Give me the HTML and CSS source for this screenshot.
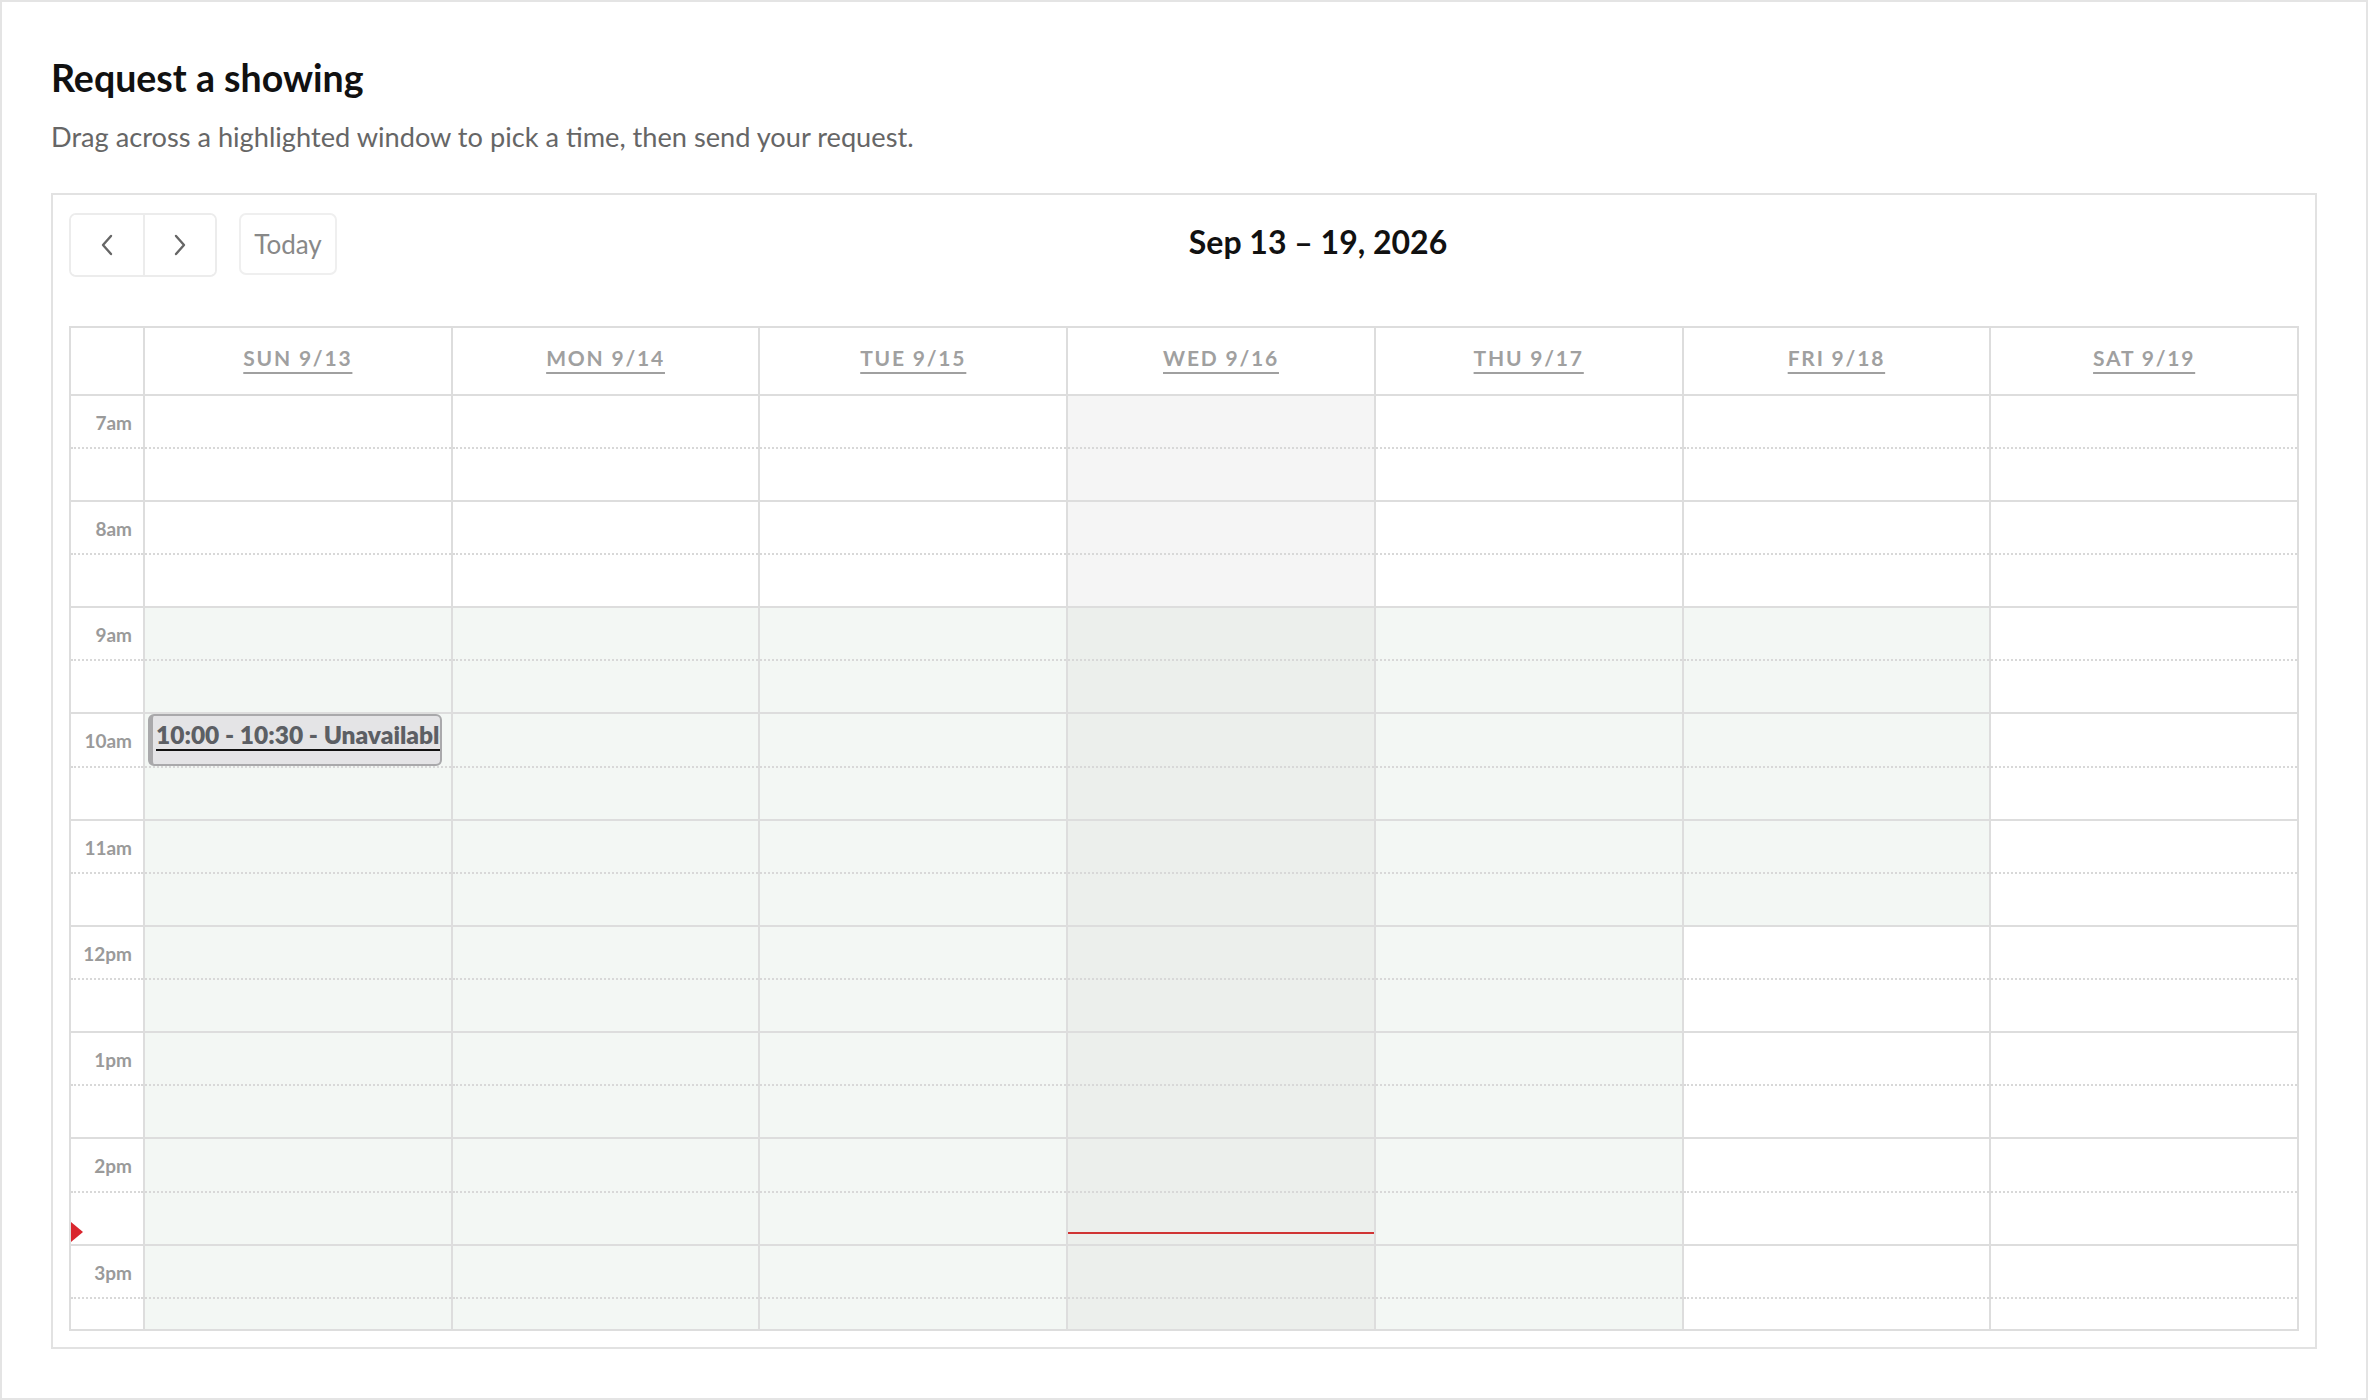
FILE: index.html
```html
<!DOCTYPE html>
<html lang="en">
<head>
<meta charset="utf-8">
<title>Request a showing</title>
<link rel="stylesheet" href="styles.css">
</head>
<body>
<div class="page">
  <h1 class="title">Request a showing</h1>
  <p class="subtitle">Drag across a highlighted window to pick a time, then send your request.</p>

  <div class="calendar">
    <div class="toolbar">
      <div class="tb-left">
        <div class="btn-group">
          <button class="btn nav" aria-label="prev"><svg width="14" height="22" viewBox="0 0 14 22"><polyline points="11,2 3,11 11,20" fill="none" stroke="#666" stroke-width="2.4" stroke-linecap="round" stroke-linejoin="round"/></svg></button>
          <button class="btn nav" aria-label="next"><svg width="14" height="22" viewBox="0 0 14 22"><polyline points="3,2 11,11 3,20" fill="none" stroke="#666" stroke-width="2.4" stroke-linecap="round" stroke-linejoin="round"/></svg></button>
        </div>
        <button class="btn today">Today</button>
      </div>
      <h2 class="range">Sep 13 – 19, 2026</h2>
      <div class="tb-right"></div>
    </div>

    <div class="grid">
      <div class="head">
        <div class="gutter-head"></div>
        <div class="day-head"><span>Sun 9/13</span></div>
        <div class="day-head"><span>Mon 9/14</span></div>
        <div class="day-head"><span>Tue 9/15</span></div>
        <div class="day-head"><span>Wed 9/16</span></div>
        <div class="day-head"><span>Thu 9/17</span></div>
        <div class="day-head"><span>Fri 9/18</span></div>
        <div class="day-head"><span>Sat 9/19</span></div>
      </div>

      <div class="body">
        <!-- time gutter -->
        <div class="col gutter">
          <div class="slot"><span class="time">7am</span></div><div class="slot h2"></div>
          <div class="slot"><span class="time">8am</span></div><div class="slot h2"></div>
          <div class="slot"><span class="time">9am</span></div><div class="slot h2"></div>
          <div class="slot"><span class="time">10am</span></div><div class="slot h2"></div>
          <div class="slot"><span class="time">11am</span></div><div class="slot h2"></div>
          <div class="slot"><span class="time">12pm</span></div><div class="slot h2"></div>
          <div class="slot"><span class="time">1pm</span></div><div class="slot h2"></div>
          <div class="slot"><span class="time">2pm</span></div><div class="slot h2"><span class="now-arrow"></span></div>
          <div class="slot"><span class="time">3pm</span></div><div class="slot h2"></div>
        </div>

        <!-- Sun -->
        <div class="col day">
          <div class="slot"></div><div class="slot h2"></div>
          <div class="slot"></div><div class="slot h2"></div>
          <div class="slot av"></div><div class="slot h2 av"></div>
          <div class="slot av"><div class="event"><a class="event-title" href="#">10:00 - 10:30 - Unavailable</a></div></div><div class="slot h2 av"></div>
          <div class="slot av"></div><div class="slot h2 av"></div>
          <div class="slot av"></div><div class="slot h2 av"></div>
          <div class="slot av"></div><div class="slot h2 av"></div>
          <div class="slot av"></div><div class="slot h2 av"></div>
          <div class="slot av"></div><div class="slot h2 av"></div>
        </div>

        <!-- Mon -->
        <div class="col day">
          <div class="slot"></div><div class="slot h2"></div>
          <div class="slot"></div><div class="slot h2"></div>
          <div class="slot av"></div><div class="slot h2 av"></div>
          <div class="slot av"></div><div class="slot h2 av"></div>
          <div class="slot av"></div><div class="slot h2 av"></div>
          <div class="slot av"></div><div class="slot h2 av"></div>
          <div class="slot av"></div><div class="slot h2 av"></div>
          <div class="slot av"></div><div class="slot h2 av"></div>
          <div class="slot av"></div><div class="slot h2 av"></div>
        </div>

        <!-- Tue -->
        <div class="col day">
          <div class="slot"></div><div class="slot h2"></div>
          <div class="slot"></div><div class="slot h2"></div>
          <div class="slot av"></div><div class="slot h2 av"></div>
          <div class="slot av"></div><div class="slot h2 av"></div>
          <div class="slot av"></div><div class="slot h2 av"></div>
          <div class="slot av"></div><div class="slot h2 av"></div>
          <div class="slot av"></div><div class="slot h2 av"></div>
          <div class="slot av"></div><div class="slot h2 av"></div>
          <div class="slot av"></div><div class="slot h2 av"></div>
        </div>

        <!-- Wed (today) -->
        <div class="col day today-col">
          <div class="slot"></div><div class="slot h2"></div>
          <div class="slot"></div><div class="slot h2"></div>
          <div class="slot av"></div><div class="slot h2 av"></div>
          <div class="slot av"></div><div class="slot h2 av"></div>
          <div class="slot av"></div><div class="slot h2 av"></div>
          <div class="slot av"></div><div class="slot h2 av"></div>
          <div class="slot av"></div><div class="slot h2 av"></div>
          <div class="slot av"></div><div class="slot h2 av"><span class="now-line"></span></div>
          <div class="slot av"></div><div class="slot h2 av"></div>
        </div>

        <!-- Thu -->
        <div class="col day">
          <div class="slot"></div><div class="slot h2"></div>
          <div class="slot"></div><div class="slot h2"></div>
          <div class="slot av"></div><div class="slot h2 av"></div>
          <div class="slot av"></div><div class="slot h2 av"></div>
          <div class="slot av"></div><div class="slot h2 av"></div>
          <div class="slot av"></div><div class="slot h2 av"></div>
          <div class="slot av"></div><div class="slot h2 av"></div>
          <div class="slot av"></div><div class="slot h2 av"></div>
          <div class="slot av"></div><div class="slot h2 av"></div>
        </div>

        <!-- Fri -->
        <div class="col day">
          <div class="slot"></div><div class="slot h2"></div>
          <div class="slot"></div><div class="slot h2"></div>
          <div class="slot av"></div><div class="slot h2 av"></div>
          <div class="slot av"></div><div class="slot h2 av"></div>
          <div class="slot av"></div><div class="slot h2 av"></div>
          <div class="slot"></div><div class="slot h2"></div>
          <div class="slot"></div><div class="slot h2"></div>
          <div class="slot"></div><div class="slot h2"></div>
          <div class="slot"></div><div class="slot h2"></div>
        </div>

        <!-- Sat -->
        <div class="col day">
          <div class="slot"></div><div class="slot h2"></div>
          <div class="slot"></div><div class="slot h2"></div>
          <div class="slot"></div><div class="slot h2"></div>
          <div class="slot"></div><div class="slot h2"></div>
          <div class="slot"></div><div class="slot h2"></div>
          <div class="slot"></div><div class="slot h2"></div>
          <div class="slot"></div><div class="slot h2"></div>
          <div class="slot"></div><div class="slot h2"></div>
          <div class="slot"></div><div class="slot h2"></div>
        </div>
      </div>
    </div>
  </div>
</div>
</body>
</html>
```

FILE: styles.css
```css
html, body {
  margin: 0;
  padding: 0;
  background: #fff;
}

.page {
  box-sizing: border-box;
  height: 1400px;
  border: 2px solid #e4e4e4;
  padding: 0 49px;
  overflow: hidden;
  font-family: Lato, "Liberation Sans", sans-serif;
  color: #111;
}

.title {
  margin: 53px 0 0;
  font-size: 37.5px;
  line-height: 1.2;
  font-weight: 700;
  color: #111;
}

.subtitle {
  margin: 21px 0 0;
  font-size: 27.2px;
  line-height: 1.2;
  color: #666;
}

.calendar {
  margin-top: 39px;
  border: 2px solid #e2e2e2;
  padding: 18px 16px 16px;
}

/* toolbar */
.toolbar {
  display: flex;
  justify-content: space-between;
  align-items: flex-start;
  height: 64px;
  margin-bottom: 49px;
}

.tb-left {
  display: flex;
  align-items: flex-start;
  gap: 22px;
}

.btn-group {
  display: flex;
  border: 2px solid #ececec;
  border-radius: 7px;
  overflow: hidden;
}

.btn {
  font-family: inherit;
  background: #fff;
  padding: 0;
  margin: 0;
  cursor: pointer;
}

.nav {
  width: 72px;
  height: 60px;
  border: 0;
  display: flex;
  align-items: center;
  justify-content: center;
}

.nav + .nav {
  border-left: 2px solid #ececec;
}

.today {
  width: 98px;
  height: 62px;
  border: 2px solid #efefef;
  border-radius: 7px;
  font-size: 26px;
  color: #888;
}

.range {
  margin: 10px 0 0;
  font-size: 32px;
  line-height: 1.2;
  font-weight: 700;
  color: #111;
}

.tb-right {
  width: 0;
}

/* grid */
.grid {
  border: 2px solid #dddddd;
}

.head {
  display: grid;
  grid-template-columns: 72px repeat(7, 1fr);
  height: 66px;
  border-bottom: 2px solid #dddddd;
}

.day-head {
  border-left: 2px solid #dddddd;
  text-align: center;
  padding-top: 17px;
}

.day-head span {
  font-size: 21px;
  line-height: 1.2;
  font-weight: 700;
  letter-spacing: 1.8px;
  text-transform: uppercase;
  color: #a0a0a0;
  text-decoration: underline;
  text-decoration-thickness: 2px;
  text-underline-offset: 6px;
}

.body {
  display: grid;
  grid-template-columns: 72px repeat(7, 1fr);
  height: 933px;
  overflow: hidden;
}

.col {
  display: flex;
  flex-direction: column;
  min-width: 0;
}

.day {
  border-left: 2px solid #dddddd;
}

.slot {
  flex: none;
  position: relative;
  box-sizing: border-box;
  height: 53.125px;
  border-bottom: 2px dotted #d8d8d8;
}

.slot.h2 {
  border-bottom-style: solid;
  border-bottom-color: #dddddd;
}

.slot.av {
  background: #f3f7f4;
}

.today-col .slot {
  background: #f5f5f5;
}

.today-col .slot.av {
  background: #ecefec;
}

.time {
  display: block;
  text-align: right;
  padding: 16px 11px 0 0;
  font-size: 19px;
  line-height: 1.2;
  font-weight: 700;
  color: #9a9a9a;
}

/* event */
.event {
  box-sizing: border-box;
  height: 100%;
  margin: 0 9px 0 3px;
  background: #e4e4e6;
  border: 2px solid #a9a9ab;
  border-left-width: 5px;
  border-radius: 6px;
  padding: 4px 0 0 3px;
  overflow: hidden;
  white-space: nowrap;
}

.event-title {
  font-size: 24.5px;
  line-height: 1.2;
  font-weight: 800;
  color: #5c5f64;
  text-decoration: underline;
  text-decoration-color: #111;
  text-decoration-thickness: 2px;
  text-underline-offset: 5px;
}

/* now indicator */
.now-line {
  position: absolute;
  left: 0;
  right: 0;
  top: 39px;
  height: 2px;
  background: #d03434;
}

.now-arrow {
  position: absolute;
  left: 0;
  top: 29px;
  width: 0;
  height: 0;
  border-style: solid;
  border-width: 10px 0 10px 12px;
  border-color: transparent transparent transparent #d9262e;
}
```
